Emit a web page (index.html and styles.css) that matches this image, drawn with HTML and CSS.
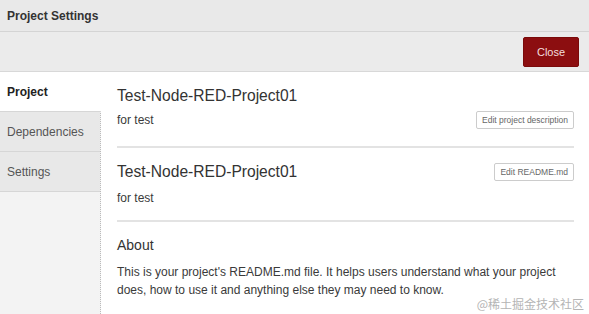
FILE: index.html
```html
<!DOCTYPE html>
<html lang="en">
<head>
    <meta charset="UTF-8">
    <meta name="viewport" content="width=device-width, initial-scale=1.0">
    <title>Project Settings</title>
<link rel="stylesheet" href="styles.css">
</head>
<body>
<div class="dialog">
    <!-- Title bar -->
    <div class="titleBar">Project Settings</div>

    <!-- Toolbar -->
    <div class="toolBar">
        <button class="closeBtn">Close</button>
    </div>

    <div class="dialogBody">
        <!-- Tabs -->
        <div class="tabList">
            <div class="tab active">Project</div>
            <div class="tab">Dependencies</div>
            <div class="tab">Settings</div>
            <div class="tabFill"></div>
        </div>

        <!-- Project pane -->
        <div class="pane">
            <div class="section">
                <h3>Test-Node-RED-Project01</h3>
                <div class="row">
                    <p>for test</p>
                    <button class="editBtn">Edit project description</button>
                </div>
            </div>
            <div class="section">
                <div class="row">
                    <h3>Test-Node-RED-Project01</h3>
                    <button class="editBtn">Edit README.md</button>
                </div>
                <p>for test</p>
            </div>
            <div class="about">
                <h4>About</h4>
                <p>This is your project's README.md file. It helps users understand what your project does, how to use it and anything else they may need to know.</p>
            </div>
        </div>
    </div>
    <div class="watermark">@稀土掘金技术社区</div>
</div>
</body>
</html>
```

FILE: styles.css
```css
* {
    box-sizing: border-box;
}
body {
    margin: 0;
    font-family: "Liberation Sans", Arial, "Noto Sans CJK SC", sans-serif;
    color: #333;
    background: #fff;
}
.dialog {
    width: 589px;
    height: 314px;
    display: flex;
    flex-direction: column;
    overflow: hidden;
    position: relative;
}
.titleBar {
    height: 32px;
    padding: 0 7px;
    display: flex;
    align-items: center;
    background: #e9e9e9;
    border-bottom: 1px solid #d4d4d4;
    font-size: 12px;
    font-weight: bold;
    color: #333;
}
.toolBar {
    height: 40px;
    display: flex;
    align-items: center;
    justify-content: flex-end;
    padding: 0 10px;
    background: #ebebeb;
    border-bottom: 1px solid #d8d8d8;
}
.closeBtn {
    width: 56px;
    height: 30px;
    background: #8c0e10;
    color: #f3dede;
    border: 1px solid #7a0a0a;
    border-radius: 2px;
    font-family: inherit;
    font-size: 11px;
}
.dialogBody {
    flex: 1;
    display: flex;
}
.tabList {
    width: 101px;
    display: flex;
    flex-direction: column;
    border-right: 1px dotted #bbb;
    background: #f3f3f3;
}
.tab {
    height: 40px;
    padding: 0 7px;
    display: flex;
    align-items: center;
    font-size: 12px;
    color: #555;
    background: #e8e8e8;
    border-bottom: 1px solid #d6d6d6;
}
.tab.active {
    background: #fff;
    color: #222;
    font-weight: bold;
    margin-right: -1px;
}
.tabFill {
    flex: 1;
}
.pane {
    flex: 1;
    padding: 0 15px 0 16px;
}
.section {
    border-bottom: 2px solid #e3e3e3;
    padding: 15px 0 17px;
}
.section + .section {
    padding-top: 15px;
    padding-bottom: 15px;
}
.row {
    display: flex;
    align-items: center;
    justify-content: space-between;
}
h3 {
    margin: 0;
    font-size: 15.6px;
    line-height: 18px;
    font-weight: 500;
    color: #333;
}
p {
    margin: 0;
    font-size: 12px;
    line-height: 14px;
    color: #3a3a3a;
}
.section h3 + .row {
    margin-top: 6px;
}
.section .row + p {
    margin-top: 10px;
}
.editBtn {
    height: 18px;
    padding: 0 5px;
    background: #fff;
    border: 1px solid #ccc;
    border-radius: 2px;
    font-family: inherit;
    font-size: 8.5px;
    color: #666;
}
.about {
    padding-top: 15px;
}
h4 {
    margin: 0;
    font-size: 14px;
    line-height: 16px;
    font-weight: 500;
    color: #333;
}
.about p {
    margin-top: 10px;
    line-height: 18px;
}
.watermark {
    position: absolute;
    right: 5px;
    bottom: 4px;
    font-size: 12px;
    line-height: 12px;
    color: #b4b4b4;
    font-family: "Noto Sans CJK SC", sans-serif;
}
```
